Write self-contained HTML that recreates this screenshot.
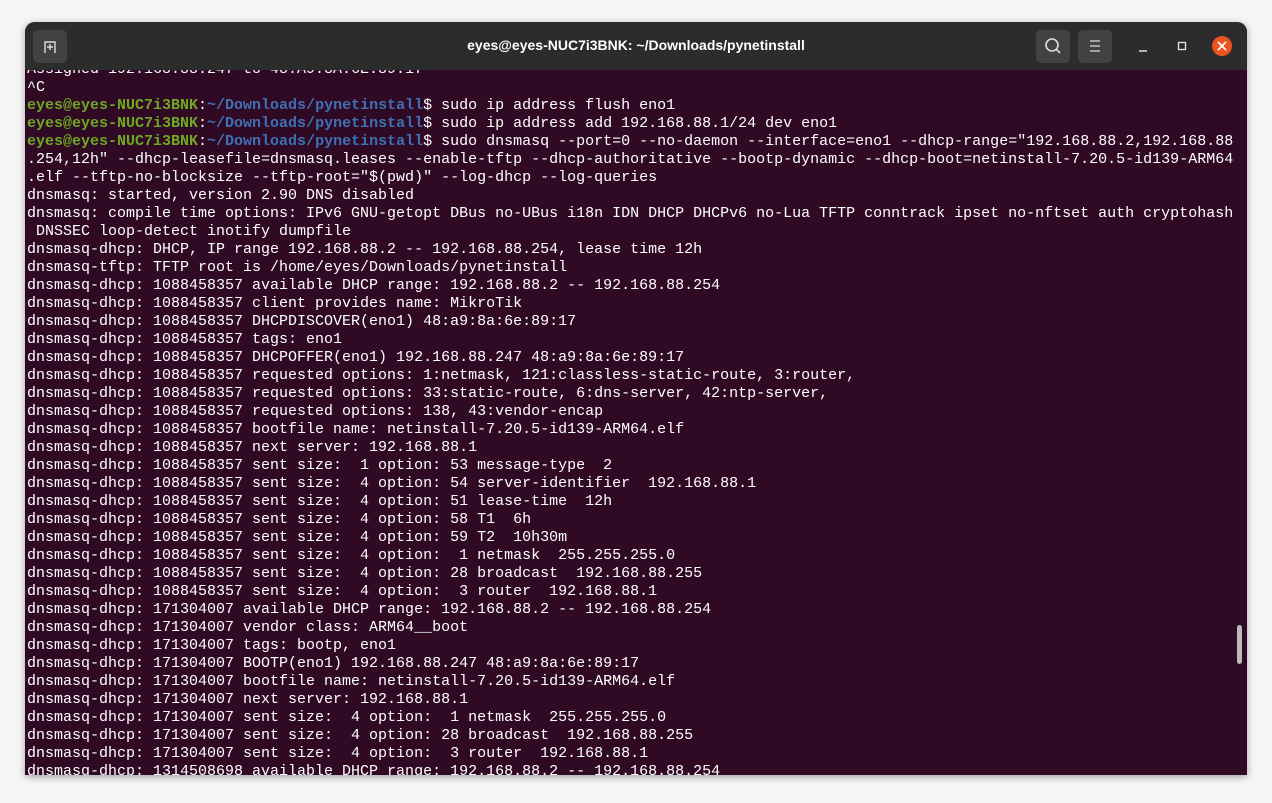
<!DOCTYPE html><html><head><style>
body{margin:0;width:1272px;height:803px;background:#f6f6f6;position:relative;overflow:hidden;font-family:"Liberation Sans",sans-serif}
.win{position:absolute;left:25px;top:22px;width:1222px;height:753px;border-radius:10px 10px 0 0;overflow:hidden;box-shadow:0 2px 8px rgba(0,0,0,.35);background:#300a24}
.tb{position:absolute;left:0;top:0;width:1222px;height:48px;background:#2c2c2c}
.btn{position:absolute;top:8px;width:34px;height:33px;border-radius:5px;background:#424242}
.title{position:absolute;left:0;right:0;top:15px;text-align:center;color:#fff;font-weight:bold;font-size:14px}
.term{position:absolute;left:0;top:48px;width:1222px;height:705px;overflow:hidden}
pre{margin:0;position:absolute;left:2px;top:-9px;font-family:"Liberation Mono",monospace;font-size:15px;line-height:18px;color:#fff}
.g{color:#6ea823;font-weight:bold}.b{color:#3e70b6;font-weight:bold}
.sb{position:absolute;left:1212px;top:555px;width:5px;height:39px;border-radius:3px;background:#bbb}
</style></head><body>
<div class="win">
<div class="tb">
<div class="btn" style="left:8px"><svg width="34" height="33"><path d="M12 23V12h10v11" fill="none" stroke="#ddd" stroke-width="1.4"/><path d="M17 14v6M14 17h6" stroke="#ddd" stroke-width="1.4"/></svg></div>
<div class="title">eyes@eyes-NUC7i3BNK: ~/Downloads/pynetinstall</div>
<div class="btn" style="left:1011px"><svg width="34" height="33"><circle cx="16" cy="15" r="6" fill="none" stroke="#ddd" stroke-width="1.6"/><path d="M20 19l4 4" stroke="#ddd" stroke-width="1.6"/></svg></div>
<div class="btn" style="left:1053px"><svg width="34" height="33"><path d="M12 11h10M12 16h10M12 21h10" stroke="#ddd" stroke-width="1.3"/></svg></div>
<svg style="position:absolute;left:1110px;top:14px" width="110" height="22"><path d="M4 15h8" stroke="#ddd" stroke-width="1.5"/><rect x="43.5" y="6.5" width="7" height="7" fill="none" stroke="#ddd" stroke-width="1.4"/><circle cx="87" cy="10" r="10" fill="#e95420"/><path d="M83 6l8 8M91 6l-8 8" stroke="#fff" stroke-width="1.6"/></svg>
</div>
<div class="term"><pre>Assigned 192.168.88.247 to 48:A9:8A:6E:89:17
^C
<span class="g">eyes@eyes-NUC7i3BNK</span>:<span class="b">~/Downloads/pynetinstall</span>$ sudo ip address flush eno1
<span class="g">eyes@eyes-NUC7i3BNK</span>:<span class="b">~/Downloads/pynetinstall</span>$ sudo ip address add 192.168.88.1/24 dev eno1
<span class="g">eyes@eyes-NUC7i3BNK</span>:<span class="b">~/Downloads/pynetinstall</span>$ sudo dnsmasq --port=0 --no-daemon --interface=eno1 --dhcp-range="192.168.88.2,192.168.88
.254,12h" --dhcp-leasefile=dnsmasq.leases --enable-tftp --dhcp-authoritative --bootp-dynamic --dhcp-boot=netinstall-7.20.5-id139-ARM64
.elf --tftp-no-blocksize --tftp-root="$(pwd)" --log-dhcp --log-queries
dnsmasq: started, version 2.90 DNS disabled
dnsmasq: compile time options: IPv6 GNU-getopt DBus no-UBus i18n IDN DHCP DHCPv6 no-Lua TFTP conntrack ipset no-nftset auth cryptohash
 DNSSEC loop-detect inotify dumpfile
dnsmasq-dhcp: DHCP, IP range 192.168.88.2 -- 192.168.88.254, lease time 12h
dnsmasq-tftp: TFTP root is /home/eyes/Downloads/pynetinstall
dnsmasq-dhcp: 1088458357 available DHCP range: 192.168.88.2 -- 192.168.88.254
dnsmasq-dhcp: 1088458357 client provides name: MikroTik
dnsmasq-dhcp: 1088458357 DHCPDISCOVER(eno1) 48:a9:8a:6e:89:17
dnsmasq-dhcp: 1088458357 tags: eno1
dnsmasq-dhcp: 1088458357 DHCPOFFER(eno1) 192.168.88.247 48:a9:8a:6e:89:17
dnsmasq-dhcp: 1088458357 requested options: 1:netmask, 121:classless-static-route, 3:router,
dnsmasq-dhcp: 1088458357 requested options: 33:static-route, 6:dns-server, 42:ntp-server,
dnsmasq-dhcp: 1088458357 requested options: 138, 43:vendor-encap
dnsmasq-dhcp: 1088458357 bootfile name: netinstall-7.20.5-id139-ARM64.elf
dnsmasq-dhcp: 1088458357 next server: 192.168.88.1
dnsmasq-dhcp: 1088458357 sent size:  1 option: 53 message-type  2
dnsmasq-dhcp: 1088458357 sent size:  4 option: 54 server-identifier  192.168.88.1
dnsmasq-dhcp: 1088458357 sent size:  4 option: 51 lease-time  12h
dnsmasq-dhcp: 1088458357 sent size:  4 option: 58 T1  6h
dnsmasq-dhcp: 1088458357 sent size:  4 option: 59 T2  10h30m
dnsmasq-dhcp: 1088458357 sent size:  4 option:  1 netmask  255.255.255.0
dnsmasq-dhcp: 1088458357 sent size:  4 option: 28 broadcast  192.168.88.255
dnsmasq-dhcp: 1088458357 sent size:  4 option:  3 router  192.168.88.1
dnsmasq-dhcp: 171304007 available DHCP range: 192.168.88.2 -- 192.168.88.254
dnsmasq-dhcp: 171304007 vendor class: ARM64__boot
dnsmasq-dhcp: 171304007 tags: bootp, eno1
dnsmasq-dhcp: 171304007 BOOTP(eno1) 192.168.88.247 48:a9:8a:6e:89:17
dnsmasq-dhcp: 171304007 bootfile name: netinstall-7.20.5-id139-ARM64.elf
dnsmasq-dhcp: 171304007 next server: 192.168.88.1
dnsmasq-dhcp: 171304007 sent size:  4 option:  1 netmask  255.255.255.0
dnsmasq-dhcp: 171304007 sent size:  4 option: 28 broadcast  192.168.88.255
dnsmasq-dhcp: 171304007 sent size:  4 option:  3 router  192.168.88.1
dnsmasq-dhcp: 1314508698 available DHCP range: 192.168.88.2 -- 192.168.88.254</pre>
<div class="sb"></div></div>
</div>
</body></html>
